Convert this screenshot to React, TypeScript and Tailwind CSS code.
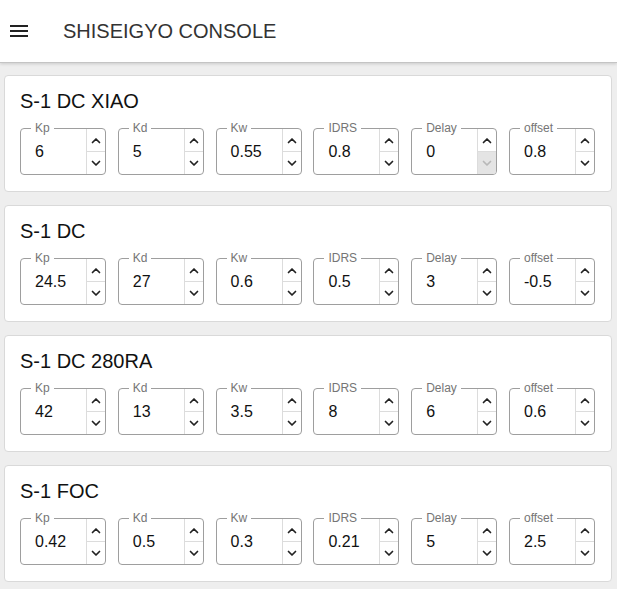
import React from "react";

type Field = { label: string; value: string; downDisabled?: boolean };
type Group = { title: string; fields: Field[] };

const groups: Group[] = [
  {
    title: "S-1 DC XIAO",
    fields: [
      { label: "Kp", value: "6" },
      { label: "Kd", value: "5" },
      { label: "Kw", value: "0.55" },
      { label: "IDRS", value: "0.8" },
      { label: "Delay", value: "0", downDisabled: true },
      { label: "offset", value: "0.8" },
    ],
  },
  {
    title: "S-1 DC",
    fields: [
      { label: "Kp", value: "24.5" },
      { label: "Kd", value: "27" },
      { label: "Kw", value: "0.6" },
      { label: "IDRS", value: "0.5" },
      { label: "Delay", value: "3" },
      { label: "offset", value: "-0.5" },
    ],
  },
  {
    title: "S-1 DC 280RA",
    fields: [
      { label: "Kp", value: "42" },
      { label: "Kd", value: "13" },
      { label: "Kw", value: "3.5" },
      { label: "IDRS", value: "8" },
      { label: "Delay", value: "6" },
      { label: "offset", value: "0.6" },
    ],
  },
  {
    title: "S-1 FOC",
    fields: [
      { label: "Kp", value: "0.42" },
      { label: "Kd", value: "0.5" },
      { label: "Kw", value: "0.3" },
      { label: "IDRS", value: "0.21" },
      { label: "Delay", value: "5" },
      { label: "offset", value: "2.5" },
    ],
  },
];

function Chevron({ up, color }: { up: boolean; color: string }) {
  return (
    <svg width="10" height="7" viewBox="0 0 10 7" fill="none">
      <path
        d={up ? "M1.5 5.5 L5 2 L8.5 5.5" : "M1.5 1.5 L5 5 L8.5 1.5"}
        stroke={color}
        strokeWidth="1.7"
        strokeLinecap="round"
        strokeLinejoin="round"
      />
    </svg>
  );
}

function NumberField({ f }: { f: Field }) {
  return (
    <div className="relative w-[86px] h-[47px] border border-[#9e9e9e] rounded-[4px] flex bg-white">
      <span className="absolute -top-[8px] left-[10px] px-[4px] bg-white text-[12px] leading-[14px] text-[#757575]">
        {f.label}
      </span>
      <div className="flex-1 flex items-center pl-[14px] text-[16px] text-[#111]">{f.value}</div>
      <div className="w-[19px] border-l border-[#dcdcdc] flex flex-col">
        <div className="flex-1 flex items-center justify-center">
          <Chevron up color="#222" />
        </div>
        <div
          className={
            f.downDisabled
              ? "flex-1 flex items-center justify-center border-t border-[#dcdcdc] bg-[#e4e4e4] rounded-br-[3px]"
              : "flex-1 flex items-center justify-center border-t border-[#dcdcdc]"
          }
        >
          <Chevron up={false} color={f.downDisabled ? "#b8b8b8" : "#222"} />
        </div>
      </div>
    </div>
  );
}

export default function App() {
  return (
    <div
      className="min-h-[589px] bg-[#eeeeee] pb-[8px]"
      style={{ fontFamily: '"Liberation Sans", Arial, sans-serif' }}
    >
      <header className="h-[63px] bg-white flex items-center border-b border-[#c4c4c4] shadow-[0_1px_3px_rgba(0,0,0,0.15)]">
        <div className="ml-[10px] w-[18px] flex flex-col gap-[3px]">
          <div className="h-[2px] bg-[#222]" />
          <div className="h-[2px] bg-[#222]" />
          <div className="h-[2px] bg-[#222]" />
        </div>
        <div className="ml-[35px] text-[20px] text-[#333]">SHISEIGYO CONSOLE</div>
      </header>
      <main className="flex flex-col gap-[13px] ml-[4px] mr-[5px] mt-[12px]">
        {groups.map((g) => (
          <section
            key={g.title}
            className="bg-white border border-[#d9d9d9] rounded-[4px] pl-[15px] pr-[16px] pt-[11px] pb-[16px]"
          >
            <h2 className="text-[20px] leading-[28px] text-[#111]">{g.title}</h2>
            <div className="mt-[13px] flex justify-between">
              {g.fields.map((f) => (
                <NumberField key={f.label} f={f} />
              ))}
            </div>
          </section>
        ))}
      </main>
    </div>
  );
}
